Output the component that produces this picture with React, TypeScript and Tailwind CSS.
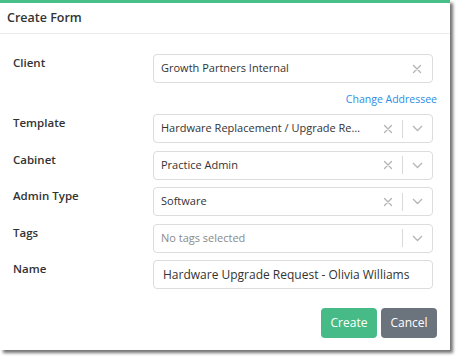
import React from "react";

const font = { fontFamily: '"Open Sans", "Noto Sans", sans-serif' };

function Clear() {
  return (
    <svg width="10" height="10" viewBox="0 0 10 10" className="shrink-0">
      <path d="M1.5 1.5 L8.5 8.5 M8.5 1.5 L1.5 8.5" stroke="#b5b5b5" strokeWidth="1.4" strokeLinecap="round" />
    </svg>
  );
}

function Chevron() {
  return (
    <svg width="11" height="7" viewBox="0 0 11 7" className="shrink-0">
      <path d="M1 1 L5.5 5.5 L10 1" stroke="#b5b5b5" strokeWidth="1.3" fill="none" />
    </svg>
  );
}

function Select({ value, placeholder, clear = true, dropdown = true }: { value?: string; placeholder?: string; clear?: boolean; dropdown?: boolean }) {
  return (
    <div className="flex h-[29px] w-[280px] items-center rounded-[4px] border border-[#dcdcdc] bg-white pl-[7px]">
      <span className={`flex-1 truncate pr-[14px] text-[11px] ${value ? "text-[#333]" : "text-[#8a8a8a]"}`}>{value ?? placeholder}</span>
      {clear && (
        <span className={`flex w-[18px] justify-center ${dropdown ? "mr-[5px]" : ""}`}>
          <Clear />
        </span>
      )}
      {dropdown ? (
        <>
          <span className="h-[18px] w-px bg-[#d9d9d9]" />
          <span className="flex w-[29px] justify-center">
            <Chevron />
          </span>
        </>
      ) : (
        <span className="w-[6px]" />
      )}
    </div>
  );
}

function Row({ label, children }: { label: string; children: React.ReactNode }) {
  return (
    <div className="flex">
      <div className="w-[140px] pt-[1px] text-[11.5px] font-semibold leading-[16px] text-[#333]">{label}</div>
      {children}
    </div>
  );
}

export default function App() {
  return (
    <div className="h-[363px] w-[462px] bg-white" style={font}>
      <div className="flex h-[350px] w-[450px] flex-col border-t-[3px] border-[#48be88] bg-white shadow-[3px_3px_3px_rgba(0,0,0,0.55)]">
        <div className="flex h-[31px] items-center border-b border-[#ececec] pl-[7px] text-[12.5px] font-semibold text-[#333]">
          Create Form
        </div>
        <div className="flex flex-col pl-[13px] pt-[20px]">
          <Row label="Client">
            <Select value="Growth Partners Internal" dropdown={false} />
          </Row>
          <div className="flex h-[31px] w-[424px] items-center justify-end pt-[2px] text-[10.5px] text-[#2b8de6]">
            Change Addressee
          </div>
          <div className="flex flex-col gap-[7.5px]">
            <Row label="Template">
              <Select value="Hardware Replacement / Upgrade Request" />
            </Row>
            <Row label="Cabinet">
              <Select value="Practice Admin" />
            </Row>
            <Row label="Admin Type">
              <Select value="Software" />
            </Row>
            <Row label="Tags">
              <Select placeholder="No tags selected" clear={false} />
            </Row>
            <Row label="Name">
              <div className="flex h-[29px] w-[280px] items-center rounded-[4px] border border-[#dcdcdc] bg-white pl-[9px] text-[12px] text-[#333]">
                Hardware Upgrade Request - Olivia Williams
              </div>
            </Row>
          </div>
          <div className="mt-[19px] flex w-[424px] justify-end gap-[4px]">
            <button className="h-[30px] w-[56px] rounded-[4px] bg-[#46bb87] text-[12px] text-white">Create</button>
            <button className="h-[30px] w-[56px] rounded-[4px] bg-[#6b737c] text-[12px] text-white">Cancel</button>
          </div>
        </div>
      </div>
    </div>
  );
}
